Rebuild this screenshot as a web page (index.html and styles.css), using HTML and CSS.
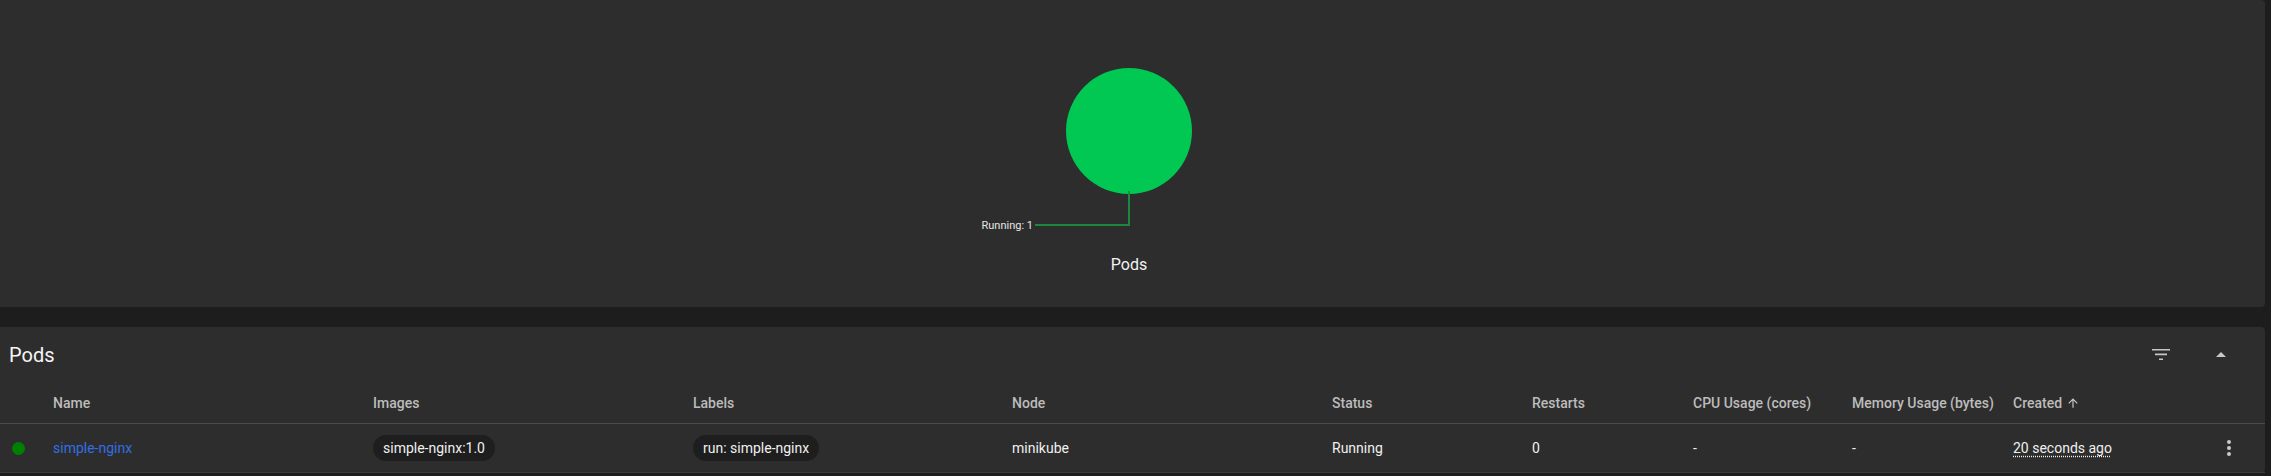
FILE: index.html
```html
<!DOCTYPE html>
<html lang="en">
<head>
<meta charset="utf-8">
<title>Pods</title>
<link rel="stylesheet" href="styles.css">
</head>
<body>
<div class="page">
  <section class="card chart-card">
    <svg class="pie" width="320" height="180" viewBox="0 0 320 180">
      <circle cx="160" cy="70" r="63" fill="#00c853"/>
      <polyline points="160,130 160,164 66,164" fill="none" stroke="#1b873f" stroke-width="2"/>
      <text x="64" y="168" text-anchor="end" class="pie-label">Running: 1</text>
    </svg>
    <div class="chart-title">Pods</div>
  </section>

  <section class="card table-card">
    <div class="toolbar">
      <h2 class="title">Pods</h2>
      <div class="actions">
        <button class="icon-btn" aria-label="Filter">
          <svg width="24" height="24" viewBox="0 0 24 24"><path fill="#c8c8c8" d="M10 17h4v-1.6h-4zM3 6v1.6h18V6zm3 6.2h12v-1.6H6z"/></svg>
        </button>
        <button class="icon-btn" aria-label="Collapse">
          <svg width="24" height="24" viewBox="0 0 24 24"><path fill="#c8c8c8" d="M7 14l5-5 5 5z"/></svg>
        </button>
      </div>
    </div>
    <div class="table">
      <div class="row head">
        <div class="cell"></div>
        <div class="cell">Name</div>
        <div class="cell">Images</div>
        <div class="cell">Labels</div>
        <div class="cell">Node</div>
        <div class="cell">Status</div>
        <div class="cell">Restarts</div>
        <div class="cell">CPU Usage (cores)</div>
        <div class="cell">Memory Usage (bytes)</div>
        <div class="cell sorted">Created
          <svg class="sort" width="14" height="14" viewBox="0 0 24 24"><path fill="#c8c8c8" d="M4 12l1.41 1.41L11 7.83V20h2V7.83l5.58 5.59L20 12l-8-8-8 8z"/></svg>
        </div>
        <div class="cell"></div>
      </div>
      <div class="row data">
        <div class="cell dot-cell"><span class="dot"></span></div>
        <div class="cell"><a class="link" href="#">simple-nginx</a></div>
        <div class="cell"><span class="chip">simple-nginx:1.0</span></div>
        <div class="cell"><span class="chip">run: simple-nginx</span></div>
        <div class="cell">minikube</div>
        <div class="cell">Running</div>
        <div class="cell">0</div>
        <div class="cell">-</div>
        <div class="cell">-</div>
        <div class="cell"><span class="age">20 seconds ago</span></div>
        <div class="cell menu-cell">
          <svg width="24" height="24" viewBox="0 0 24 24"><circle cx="12" cy="6" r="2" fill="#c8c8c8"/><circle cx="12" cy="12" r="2" fill="#c8c8c8"/><circle cx="12" cy="18" r="2" fill="#c8c8c8"/></svg>
        </div>
      </div>
    </div>
  </section>
</div>
</body>
</html>
```

FILE: styles.css
```css
* { box-sizing: border-box; }

html, body {
  margin: 0;
  padding: 0;
  background: #1d1d1d;
  font-family: Roboto, "Liberation Sans", sans-serif;
  color: rgba(255, 255, 255, 0.87);
  overflow: hidden;
}

.page {
  display: flex;
  flex-direction: column;
  gap: 20px;
  padding-right: 6px;
}

.card {
  background: #2d2d2d;
  border-radius: 0 4px 4px 0;
}

.chart-card {
  height: 307px;
  display: flex;
  flex-direction: column;
  align-items: center;
  padding-top: 61px;
  padding-right: 7px;
}

.pie { display: block; }

.pie-label {
  font-family: Roboto, "Liberation Sans", sans-serif;
  font-size: 11px;
  fill: #e6e6e6;
}

.chart-title {
  margin-top: 14px;
  font-size: 16px;
  line-height: 20px;
  color: #f2f2f2;
}

.toolbar {
  height: 56px;
  display: flex;
  align-items: center;
  justify-content: space-between;
  padding: 0 24px 0 9px;
}

.title {
  margin: 0;
  font-size: 20px;
  font-weight: 400;
  color: #f5f5f5;
}

.actions {
  display: flex;
  gap: 20px;
}

.icon-btn {
  width: 40px;
  height: 40px;
  display: flex;
  align-items: center;
  justify-content: center;
  padding: 0;
  border: 0;
  background: transparent;
}

.row {
  display: grid;
  grid-template-columns: 53px 320px 320px 319px 320px 200px 161px 159px 161px 1fr 72px;
  align-items: center;
  font-size: 14px;
}

.row.head {
  height: 41px;
  border-bottom: 1px solid #4a4a4a;
  font-weight: 500;
  color: #bcbcbc;
}

.row.data {
  height: 49px;
  border-bottom: 1px solid #3c3c3c;
  color: #f0f0f0;
}

.cell {
  white-space: nowrap;
}

.sorted {
  display: flex;
  align-items: center;
  gap: 4px;
}

.sort { display: block; }

.dot-cell {
  padding-left: 12px;
  display: flex;
  align-items: center;
}

.dot {
  width: 13px;
  height: 13px;
  border-radius: 50%;
  background: #008000;
}

.link {
  color: #326de6;
  text-decoration: none;
}

.chip {
  display: inline-block;
  height: 26px;
  line-height: 26px;
  padding: 0 10px;
  border-radius: 13px;
  background: #1e1e1e;
  color: #f0f0f0;
}

.age {
  text-decoration: underline dotted;
  text-underline-offset: 3px;
}

.menu-cell {
  display: flex;
  justify-content: center;
}
.menu-cell svg { display: block; }
```
